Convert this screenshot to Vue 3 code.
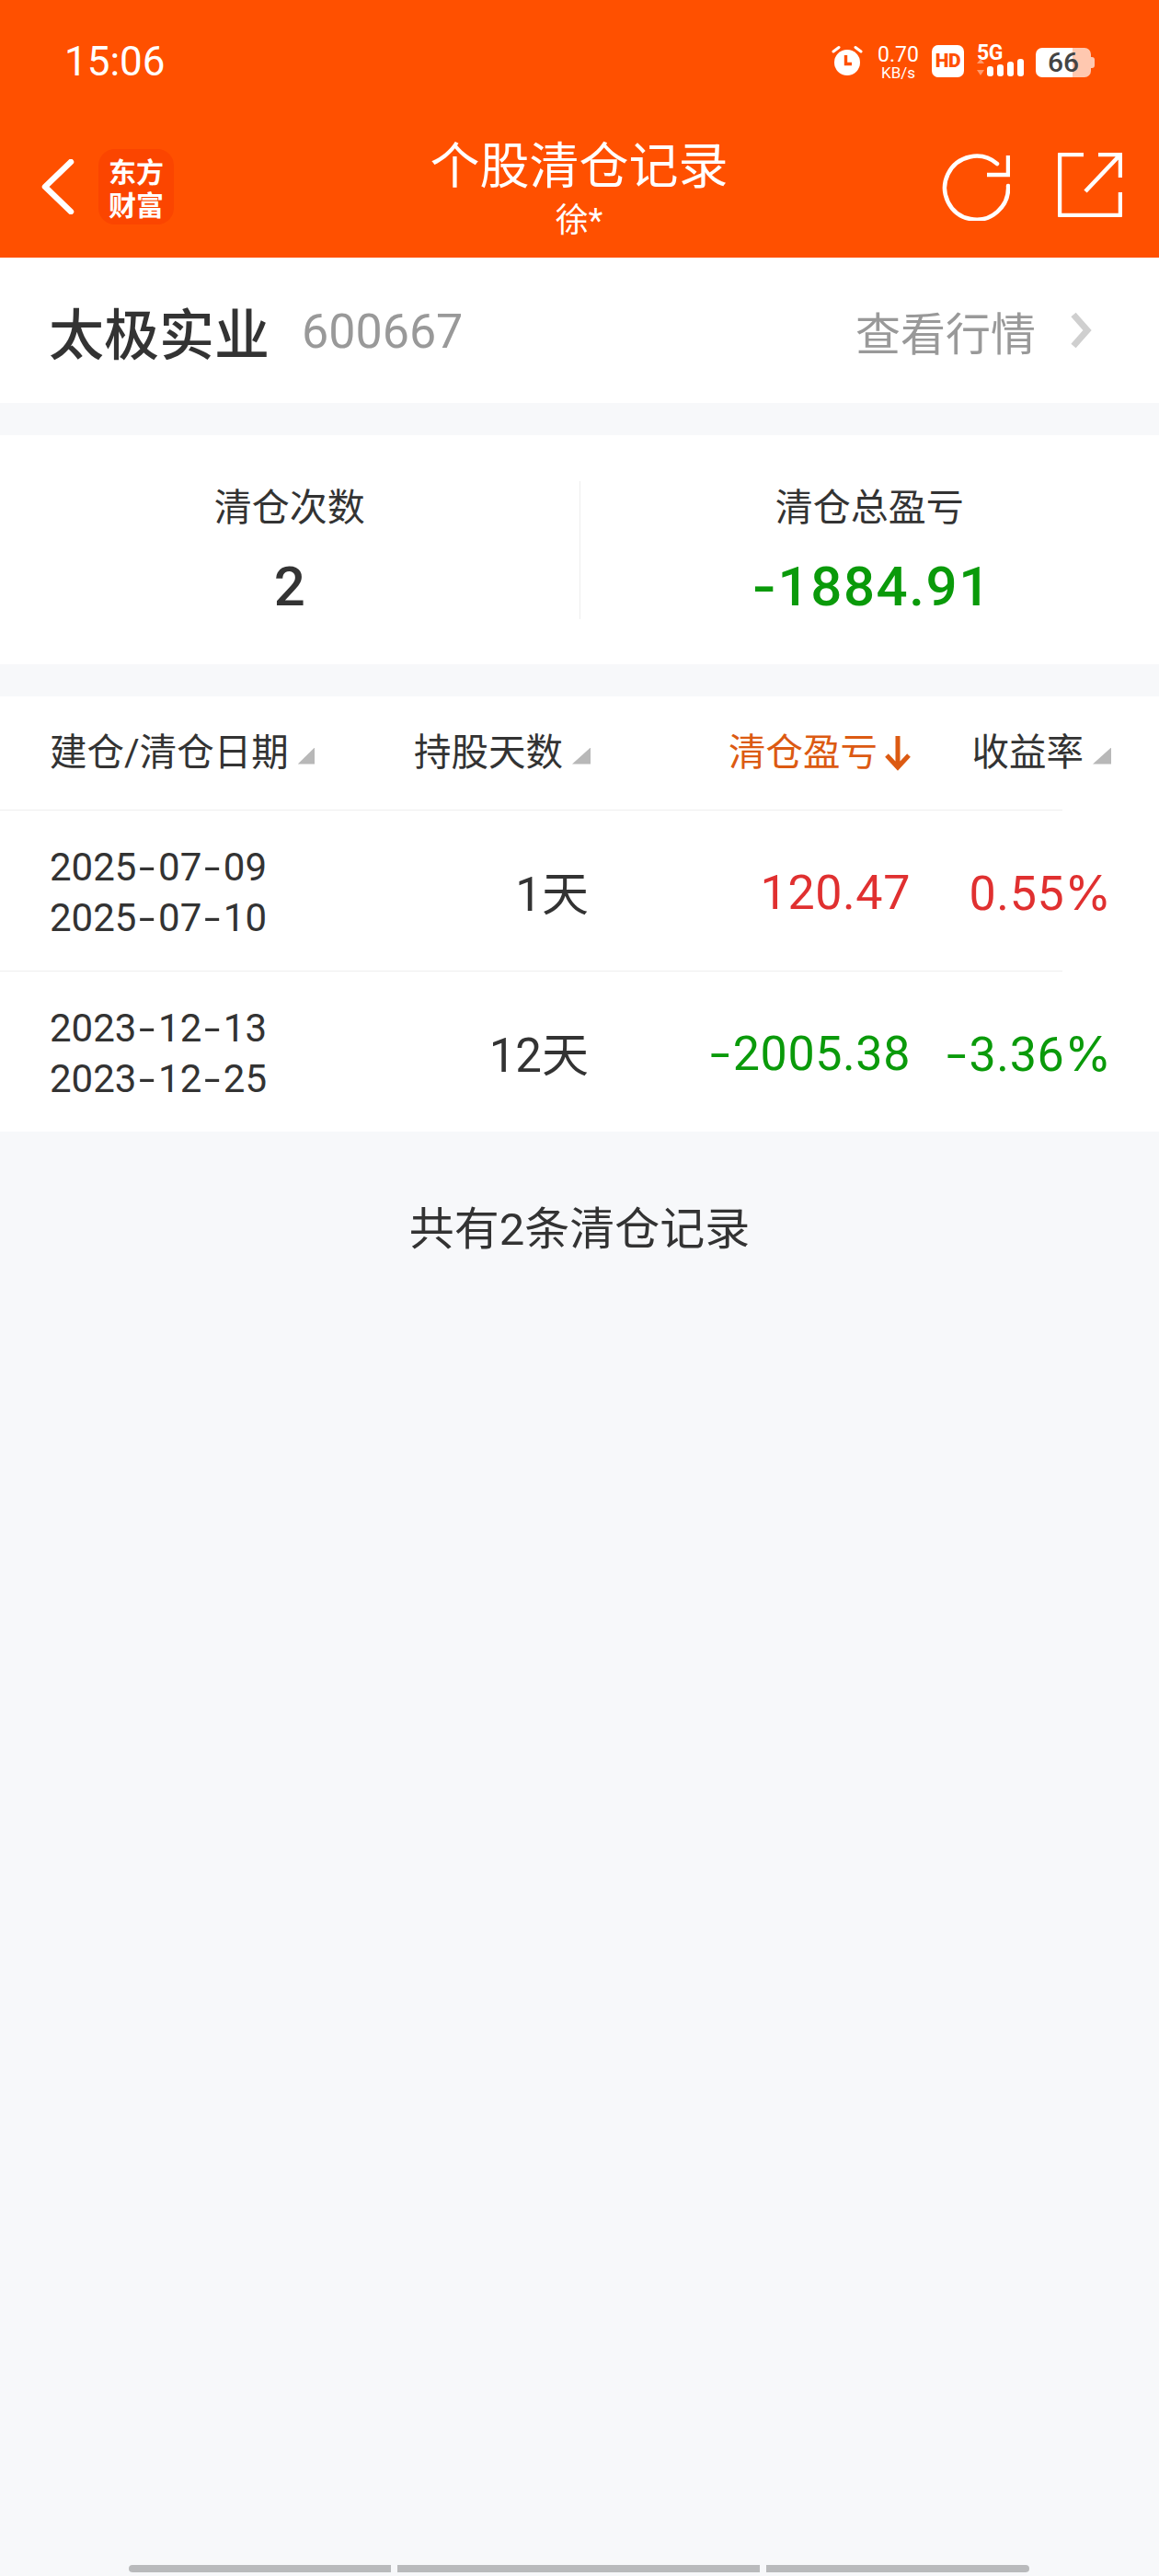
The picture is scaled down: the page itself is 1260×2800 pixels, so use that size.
<template>
  <div class="page">
    <header class="top">
      <div class="status">
        <span class="time">15:06</span>
        <div class="status-right">
          <svg class="alarm" viewBox="0 0 34 34" width="34" height="34">
            <circle cx="17" cy="19" r="14" fill="#fff" />
            <path d="M2 7 L8 2.5 M32 7 L26 2.5" stroke="#fff" stroke-width="3" stroke-linecap="round" />
            <path d="M15.5 11 V20.5 H22" fill="none" stroke="#ff5000" stroke-width="3.4" />
          </svg>
          <div class="speed">
            <span class="speed-num">0.70</span>
            <span class="speed-unit">KB/s</span>
          </div>
          <span class="hd">HD</span>
          <div class="signal">
            <span class="five-g">5G</span>
            <svg class="bars" viewBox="0 0 52 19" width="52" height="19">
              <path d="M4 0 L8 5 H0 Z M4 18 L8 12 H0 Z" fill="#ff9a6b" />
              <rect x="11" y="8" width="7" height="11" rx="3" fill="#fff" />
              <rect x="22" y="6" width="7" height="13" rx="3" fill="#fff" />
              <rect x="33" y="3" width="7" height="16" rx="3" fill="#fff" />
              <rect x="44" y="0" width="7" height="19" rx="3" fill="#fff" />
            </svg>
          </div>
          <div class="battery"><span>66</span><i></i></div>
        </div>
      </div>
      <div class="nav">
        <div class="nav-left">
          <svg viewBox="0 0 36 60" width="36" height="60">
            <path d="M32 3 L4 30 L32 57" fill="none" stroke="#fff" stroke-width="6.5" stroke-linecap="round" stroke-linejoin="round" />
          </svg>
          <div class="logo">
            <div>东方</div>
            <div>财富</div>
          </div>
        </div>
        <div class="nav-title">
          <div class="title">个股清仓记录</div>
          <div class="subtitle">徐*</div>
        </div>
        <div class="nav-right">
          <svg viewBox="0 0 74 74" width="74" height="74">
            <path d="M72 36 A34.5 34.5 0 1 1 60 12" fill="none" stroke="#fff" stroke-width="4.5" stroke-linecap="round" />
            <path d="M72 3 V24 H49" fill="none" stroke="#fff" stroke-width="4.5" />
          </svg>
          <svg viewBox="0 0 70 70" width="70" height="70">
            <path d="M28 2 H2 V68 H68 V43" fill="none" stroke="#fff" stroke-width="4.5" stroke-linejoin="round" />
            <path d="M30 42 L67 3 M44 2 H68 V27" fill="none" stroke="#fff" stroke-width="4.5" />
          </svg>
        </div>
      </div>
    </header>

    <section class="stock">
      <div class="stock-name">
        <span class="name">太极实业</span>
        <span class="code">600667</span>
      </div>
      <div class="quote">
        <span>查看行情</span>
        <svg viewBox="0 0 24 40" width="24" height="40">
          <path d="M4 3 L19 20 L4 37" fill="none" stroke="#cfcfcf" stroke-width="7" />
        </svg>
      </div>
    </section>

    <section class="summary">
      <div class="stat">
        <div class="stat-label">清仓次数</div>
        <div class="stat-value">2</div>
      </div>
      <div class="stat stat-split">
        <div class="stat-label">清仓总盈亏</div>
        <div class="stat-value green">
          <span v-for="(c, i) in tokens('-1884.91')" :key="i" :class="{ dash: c === '-' }">{{ c }}</span>
        </div>
      </div>
    </section>

    <section class="table">
      <div class="grid head">
        <div class="th th-left">建仓/清仓日期<i class="tri"></i></div>
        <div class="th">持股天数<i class="tri"></i></div>
        <div class="th active">
          清仓盈亏
          <svg viewBox="0 0 28 40" width="28" height="40">
            <path d="M14 2 V36 M2 23 L14 36 L26 23" fill="none" stroke="#dc5a12" stroke-width="5" />
          </svg>
        </div>
        <div class="th">收益率<i class="tri"></i></div>
      </div>
      <template v-for="r in rows" :key="r.open">
        <div class="sep"></div>
        <div class="grid row">
          <div class="dates">
            <div v-for="d in [r.open, r.close]" :key="d">
              <span v-for="(c, i) in tokens(d)" :key="i" :class="{ dash: c === '-' }">{{ c }}</span>
            </div>
          </div>
          <div class="days">{{ r.days }}</div>
          <div class="num" :class="r.up ? 'red' : 'green'">
            <span v-for="(c, i) in tokens(r.profit)" :key="i" :class="{ dash: c === '-' }">{{ c }}</span>
          </div>
          <div class="num" :class="r.up ? 'red' : 'green'">
            <span v-for="(c, i) in tokens(r.rate)" :key="i" :class="{ dash: c === '-', pct: c === '%' }">{{ c }}</span>
          </div>
        </div>
      </template>
    </section>

    <p class="total">共有2条清仓记录</p>

    <div class="home-bar">
      <i class="seg-a"></i><i class="seg-b"></i><i class="seg-c"></i>
    </div>
  </div>
</template>

<script setup>
const rows = [
  { open: '2025-07-09', close: '2025-07-10', days: '1天', profit: '120.47', rate: '0.55%', up: true },
  { open: '2023-12-13', close: '2023-12-25', days: '12天', profit: '-2005.38', rate: '-3.36%', up: false }
]

// hyphen and percent are wider in the app font than in Roboto
const tokens = (s) => s.split(/([-%])/).filter(Boolean)
</script>

<style>
body {
  background: #f7f8fa;
}
</style>

<style scoped>
.page {
  width: 1260px;
  height: 2800px;
  background: #f7f8fa;
  color: #333;
  font-family: Roboto, "Noto Sans CJK SC", sans-serif;
  display: flex;
  flex-direction: column;
  overflow: hidden;
}

.top {
  height: 280px;
  background: #ff5000;
  color: #fff;
  flex: none;
}
.status {
  height: 134px;
  padding: 0 74px 0 70px;
  display: flex;
  justify-content: space-between;
  align-items: flex-start;
}
.time {
  font-size: 44px;
  line-height: 44px;
  margin-top: 45px;
}
.status-right {
  margin-top: 49px;
  display: flex;
  align-items: flex-start;
}
.alarm {
  display: block;
}
.speed {
  width: 43px;
  margin-left: 17px;
  display: flex;
  flex-direction: column;
  align-items: center;
}
.speed-num {
  font-size: 23px;
  line-height: 21px;
}
.speed-unit {
  font-size: 17px;
  line-height: 16px;
  margin-top: 1px;
}
.hd {
  width: 35px;
  height: 35px;
  margin-left: 15px;
  border-radius: 7px;
  background: #fff;
  color: #ff5000;
  font-size: 21px;
  font-weight: 900;
  line-height: 35px;
  text-align: center;
  letter-spacing: -0.5px;
}
.signal {
  width: 52px;
  margin-left: 14px;
}
.five-g {
  display: block;
  font-size: 23px;
  line-height: 17px;
  font-weight: 700;
  letter-spacing: -0.5px;
}
.bars {
  display: block;
  margin-top: -2px;
}
.battery {
  width: 60px;
  height: 32px;
  margin-left: 12px;
  margin-top: 3px;
  border-radius: 7px;
  background: linear-gradient(to right, #fff 67%, #ffc8b0 67%);
  color: #444;
  font-size: 30px;
  font-weight: 500;
  line-height: 32px;
  text-align: center;
  position: relative;
}
.battery i {
  position: absolute;
  right: -4px;
  top: 10px;
  width: 4px;
  height: 12px;
  border-radius: 0 3px 3px 0;
  background: #ffc8b0;
}

.nav {
  height: 146px;
  padding: 0 40px 0 45px;
  display: grid;
  grid-template-columns: 1fr auto 1fr;
}
.nav-left {
  display: flex;
  align-items: flex-start;
  gap: 26px;
}
.nav-left svg {
  margin-top: 39px;
}
.logo {
  width: 82px;
  height: 82px;
  margin-top: 28px;
  margin-right: -4px;
  padding-top: 5px;
  box-sizing: border-box;
  border-radius: 18px;
  background: #fb4500;
  font-family: "Noto Sans CJK SC", sans-serif;
  font-size: 30px;
  font-weight: 700;
  line-height: 36px;
  text-align: center;
}
.nav-title {
  margin-left: -6px;
  text-align: center;
}
.title {
  font-size: 54px;
  line-height: 60px;
  margin-top: 18px;
}
.subtitle {
  font-size: 36px;
  line-height: 40px;
  margin-top: 8px;
}
.nav-right {
  display: flex;
  justify-content: flex-end;
  align-items: flex-start;
  gap: 52px;
}
.nav-right svg {
  margin-top: 32px;
}

.stock {
  height: 158px;
  padding: 0 73px 0 53px;
  background: #fff;
  display: flex;
  justify-content: space-between;
  align-items: center;
  flex: none;
}
.stock-name {
  display: flex;
  align-items: center;
  gap: 35px;
}
.name {
  font-size: 60px;
  font-weight: 500;
}
.code {
  font-size: 52px;
  color: #999;
  margin-top: 2px;
}
.quote {
  display: flex;
  align-items: center;
  gap: 37px;
  font-size: 49px;
  color: #999;
}

.summary {
  margin-top: 35px;
  height: 249px;
  background: #fff;
  display: flex;
  align-items: center;
  flex: none;
}
.stat {
  flex: 1;
  height: 150px;
  text-align: center;
}
.stat-split {
  border-left: 1px solid #eee;
}
.stat-label {
  font-size: 41px;
  line-height: 48px;
  margin-top: 5px;
}
.stat-value {
  font-size: 60px;
  line-height: 70px;
  font-weight: 500;
  margin-top: 27px;
}
.stat-value.green {
  letter-spacing: 1.6px;
  padding-left: 5px;
}
.stat-value .dash {
  display: inline-block;
  padding-right: 6px;
  transform: scaleX(1.25);
  transform-origin: left;
}

.table {
  margin-top: 35px;
  background: #fff;
  flex: none;
}
.grid {
  padding: 0 54px;
  display: grid;
  grid-template-columns: 286px 300px 350px 216px;
  align-items: center;
}
.head {
  height: 123px;
}
.th {
  display: flex;
  justify-content: flex-end;
  align-items: center;
  font-size: 40.5px;
  line-height: 58px;
  white-space: nowrap;
  margin-top: -2px;
}
.th-left {
  justify-content: flex-start;
}
.tri {
  width: 20px;
  height: 18px;
  margin: 8px -2px 0 10px;
  background: #b8b8b8;
  clip-path: polygon(100% 0, 100% 100%, 0 100%);
}
.active {
  color: #dc5a12;
}
.active svg {
  margin-left: 8px;
}
.sep {
  width: 1155px;
  height: 1px;
  background: #eee;
}
.row {
  height: 174px;
}
.dates {
  font-size: 42px;
  line-height: 55px;
  margin-top: 3px;
}
.dates .dash {
  display: inline-block;
  padding: 0 6px;
  transform: scaleX(1.5);
}
.days {
  font-size: 51px;
  text-align: right;
}
.num {
  font-size: 52px;
  letter-spacing: 0.6px;
  text-align: right;
  white-space: nowrap;
  margin-top: 5px;
}
.num .dash {
  display: inline-block;
  padding-right: 10px;
  transform: scaleX(1.5);
  transform-origin: left;
}
.pct {
  font-family: Inter, sans-serif;
  margin-right: -3px;
}
.red {
  color: #e03030;
}
.green {
  color: #0a9a0a;
}

.total {
  margin: 77px 0 0;
  font-size: 49px;
  line-height: 60px;
  text-align: center;
}

.home-bar {
  margin-top: auto;
  margin-bottom: 4px;
  padding-left: 140px;
  display: flex;
  gap: 7px;
}
.home-bar i {
  height: 8px;
  background: #b9babc;
}
.seg-a {
  width: 285px;
  border-radius: 4px 0 0 4px;
}
.seg-b {
  width: 394px;
}
.seg-c {
  width: 286px;
  border-radius: 0 4px 4px 0;
}
</style>
